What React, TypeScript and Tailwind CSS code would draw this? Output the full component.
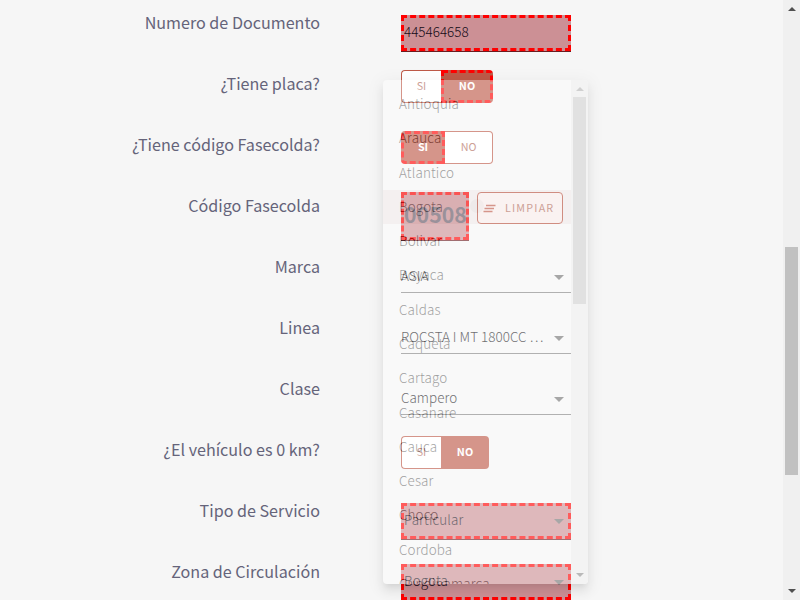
import type { ReactNode } from "react";

const CITIES = ["Antioquia", "Arauca", "Atlantico", "Bogota", "Bolivar", "Boyaca", "Caldas", "Caqueta", "Cartago", "Casanare", "Cauca", "Cesar", "Choco", "Cordoba", "Cundinamarca"];

function Row({ label, children }: { label: string; children: ReactNode }) {
  return (
    <div className="flex h-[61px] shrink-0">
      <div className="w-[320px] shrink-0 pt-[18px] text-right text-[16.12px] leading-[25px] whitespace-nowrap text-[#65647a]">{label}</div>
      <div className="ml-[81px] w-[170px] pt-[17px]">{children}</div>
    </div>
  );
}

function Caret() {
  return <div className="h-0 w-0 border-x-[5px] border-t-[5px] border-x-transparent border-t-[#757575]" />;
}

function Select({ value }: { value: string }) {
  return (
    <div className="mt-[6px] flex h-[34px] items-center justify-between border-b border-[#858585] pr-[7px]">
      <span className="pb-[2px] text-[13.43px] leading-5 font-light tracking-[0.04px] whitespace-nowrap text-[#18181c]">{value}</span>
      <div className="pt-[3px]"><Caret /></div>
    </div>
  );
}

function Marked({ value, caret = false }: { value: string; caret?: boolean }) {
  return (
    <div className="mt-[6px] mb-px flex h-[36px] items-center justify-between border-[3px] border-dashed border-[#ff0000] bg-[#cc9095] pr-1 shadow-[0_1px_#6c1c20]">
      <span className={`pb-[4px] text-[13.43px] leading-5 font-light text-[#150c18] ${caret ? "tracking-[0.12px]" : ""}`}>{value}</span>
      {caret && <div className="pt-px"><Caret /></div>}
    </div>
  );
}

function Toggle({ active, marked }: { active: "SI" | "NO"; marked: boolean }) {
  const on = marked
    ? "border-[3px] border-dashed border-[#ff0000] bg-[#be5a48] text-white font-bold"
    : "bg-[#be5a48] text-white font-bold";
  return (
    <div className={`flex h-[33px] text-[10.74px] leading-4 ${marked ? "w-[92px]" : "w-[88px]"}`}>
      <div className={`flex items-center justify-center rounded-l-[4px] pb-px ${active === "SI" ? "w-[44px] " + on : "w-[40px] border border-r-0 border-[#be5a48] bg-white text-[#b06a5a]"}`}>SI</div>
      <div className={`flex flex-1 items-center justify-center rounded-r-[4px] pb-px ${active === "NO" ? on : "border border-l-0 border-[#be5a48] bg-white text-[#b06a5a]"}`}>NO</div>
    </div>
  );
}

export default function App() {
  return (
    <div className="relative flex h-[600px] w-[800px] overflow-hidden bg-[#f6f6f6] font-['Noto_Sans_CJK_SC',sans-serif]">
      <div className="-mt-2 flex w-[783px] shrink-0 flex-col">
        <Row label="Numero de Documento"><Marked value="445464658" /></Row>
        <Row label="¿Tiene placa?"><Toggle active="NO" marked /></Row>
        <Row label="¿Tiene código Fasecolda?"><Toggle active="SI" marked /></Row>
        <Row label="Código Fasecolda">
          <div className="flex items-start gap-2">
            <div className="flex h-[48px] w-[68px] items-center border-[3px] border-dashed border-[#ff0000] bg-[#cc9095] pb-[4px] text-[21.3px] leading-none font-bold text-[#69606f] shadow-[0_1px_#6c1c20]">00508</div>
            <div className="flex h-8 w-[86px] items-center rounded-[4px] border border-[#be5a48] bg-[#fff8f7] pl-[5px] text-[10.74px] tracking-[1.2px] text-[#b77668]">
              <svg width="13" height="9" viewBox="0 0 13 9" className="mr-[9px] shrink-0 stroke-[#c66655]">
                <path d="M3 1.5H12.5M1.5 4.5H11M0.5 7.5H9.5" strokeWidth="1.3" />
              </svg>
              LIMPIAR
            </div>
          </div>
        </Row>
        <Row label="Marca"><Select value="ASIA" /></Row>
        <Row label="Linea"><Select value="ROCSTA I MT 1800CC …" /></Row>
        <Row label="Clase"><Select value="Campero" /></Row>
        <Row label="¿El vehículo es 0 km?"><Toggle active="NO" marked={false} /></Row>
        <Row label="Tipo de Servicio"><Marked value="Particular" caret /></Row>
        <Row label="Zona de Circulación"><Marked value="Bogota" caret /></Row>
      </div>

      <div className="flex h-[600px] w-[17px] flex-col items-center bg-[#f0f0f0]">
        <div className="mt-[7px] h-0 w-0 border-x-[4px] border-b-[4px] border-x-transparent border-b-[#505050]" />
        <div className="mt-[236px] h-[228px] w-[13px] bg-[#c1c1c1]" />
        <div className="mt-[114px] h-0 w-0 border-x-[4px] border-t-[4px] border-x-transparent border-t-[#505050]" />
      </div>

      {/* Department dropdown, caught partway through its fade */}
      <div className="absolute top-[80px] left-[383px] flex h-[504px] w-[205px] overflow-hidden rounded-[4px] bg-white opacity-[0.36] shadow-[0_5px_5px_-3px_rgba(0,0,0,0.2),0_8px_10px_1px_rgba(0,0,0,0.14),0_3px_14px_2px_rgba(0,0,0,0.12)]">
        <div className="w-[188px] overflow-hidden pt-[7px]">
          {CITIES.map((city) => (
            <div key={city} className={`relative flex h-[34.28px] items-center pb-[2px] pl-4 text-[13.43px] leading-5 font-light tracking-[0.14px] text-black ${city === "Bogota" ? "bg-[#f2e8e7]" : ""}`}>
              {city === "Bogota" && <div className="absolute top-[9px] left-[87px] h-[14px] w-[14px] rounded-full bg-black/7" />}
              {city}
            </div>
          ))}
        </div>
        <div className="flex w-[17px] flex-col items-center bg-[#f0f0f0]">
          <div className="mt-[7px] h-0 w-0 border-x-[4px] border-b-[4px] border-x-transparent border-b-[#909090]" />
          <div className="mt-[6px] h-[207px] w-[13px] bg-[#bdbdbd]" />
          <div className="mt-[269px] h-0 w-0 border-x-[4px] border-t-[4px] border-x-transparent border-t-[#505050]" />
        </div>
      </div>
    </div>
  );
}
